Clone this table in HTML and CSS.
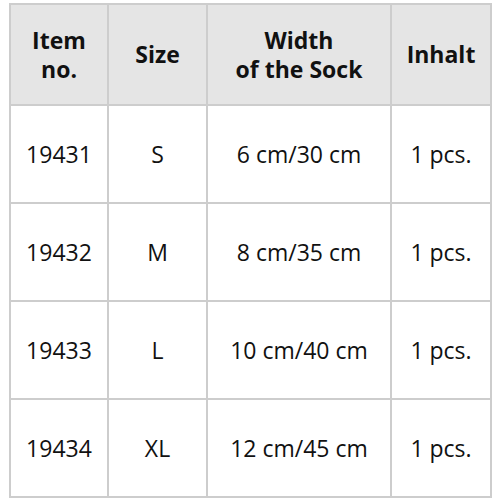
FILE: index.html
```html
<!DOCTYPE html>
<html>
<head>
<meta charset="utf-8">
<link rel="stylesheet" href="styles.css">
</head>
<body>
<div class="table">
  <div class="cell head">Item<br>no.</div>
  <div class="cell head">Size</div>
  <div class="cell head">Width<br>of the Sock</div>
  <div class="cell head">Inhalt</div>

  <div class="cell">19431</div>
  <div class="cell">S</div>
  <div class="cell">6 cm/30 cm</div>
  <div class="cell">1 pcs.</div>

  <div class="cell">19432</div>
  <div class="cell">M</div>
  <div class="cell">8 cm/35 cm</div>
  <div class="cell">1 pcs.</div>

  <div class="cell">19433</div>
  <div class="cell">L</div>
  <div class="cell">10 cm/40 cm</div>
  <div class="cell">1 pcs.</div>

  <div class="cell">19434</div>
  <div class="cell">XL</div>
  <div class="cell">12 cm/45 cm</div>
  <div class="cell">1 pcs.</div>
</div>
</body>
</html>
```
FILE: styles.css
```css
html, body {
  margin: 0;
  padding: 0;
  background: #ffffff;
}
body {
  padding: 3px 0 0 9px;
  font-family: "Open Sans", "Noto Sans", sans-serif;
  color: #111111;
}
.table {
  display: grid;
  grid-template-columns: 96px 97px 182px 98px;
  grid-template-rows: 99px 96px 96px 96px 96px;
  gap: 2px;
  padding: 2px;
  background: #cdcdcd;
  width: max-content;
}
.cell {
  background: #ffffff;
  display: flex;
  align-items: center;
  justify-content: center;
  text-align: center;
  font-size: 23px;
  line-height: 29px;
}
.cell.head {
  background: #e5e5e5;
  font-weight: 700;
}
```
